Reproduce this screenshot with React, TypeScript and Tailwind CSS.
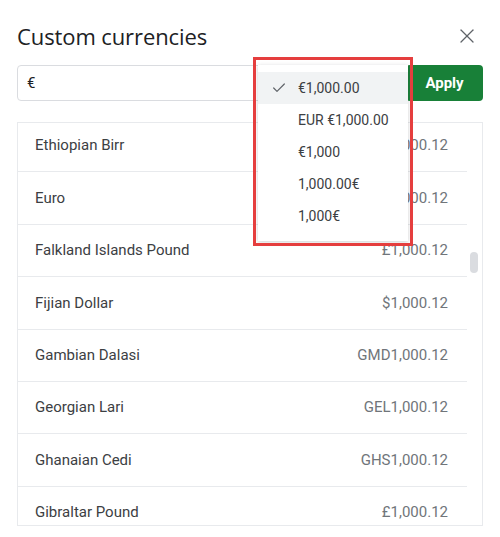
import { Check, X } from 'lucide-react';

const rows = [
    { name: 'Ethiopian Birr', value: 'ETB1,000.12' },
    { name: 'Euro', value: '€1,000.12' },
    { name: 'Falkland Islands Pound', value: '£1,000.12' },
    { name: 'Fijian Dollar', value: '$1,000.12' },
    { name: 'Gambian Dalasi', value: 'GMD1,000.12' },
    { name: 'Georgian Lari', value: 'GEL1,000.12' },
    { name: 'Ghanaian Cedi', value: 'GHS1,000.12' },
    { name: 'Gibraltar Pound', value: '£1,000.12' },
];

const formats = ['€1,000.00', 'EUR €1,000.00', '€1,000', '1,000.00€', '1,000€'];

export default function App() {
    return (
        <div className="relative w-[500px] h-[537px] bg-white overflow-hidden font-['Roboto',sans-serif]">
            {/* Header */}
            <div className="flex items-center justify-between pl-[17px] pr-[21px] pt-[21px] h-[51px]">
                <h1 className="font-['Open_Sans',sans-serif] text-[22px] leading-[28px] text-[#202124] tracking-[-0.1px]">
                    Custom currencies
                </h1>
                <X className="w-6 h-6 text-[#5f6368]" strokeWidth={1.3} />
            </div>

            {/* Search + apply */}
            <div className="flex gap-2 px-[17px] mt-[14px]">
                <div className="flex-1 h-9 border border-[#dadce0] rounded flex items-center px-[9px] text-[15px] text-[#202124]">
                    €
                </div>
                <button className="w-[77px] h-9 rounded bg-[#188038] text-white font-bold text-[15px]">
                    Apply
                </button>
            </div>

            {/* Currency list */}
            <div className="relative mx-[17px] mt-[21px] h-[404px] border border-[#e8eaed] overflow-hidden">
                <div className="-mt-[3px] mr-[15px]">
                    {rows.map((r) => (
                        <div
                            key={r.name}
                            className="h-[52.4px] flex items-center justify-between pl-[17px] pr-[19px] border-b border-[#e8eaed] text-[15px]"
                        >
                            <span className="text-[#3c4043]">{r.name}</span>
                            <span className="text-[#70757a]">{r.value}</span>
                        </div>
                    ))}
                </div>
                {/* Scrollbar */}
                <div className="absolute right-[4px] top-[129px] w-[8px] h-[21px] rounded-full bg-[#dadce0]" />
            </div>

            {/* Format dropdown */}
            <div className="absolute left-[258px] top-[65px] w-[150px] h-[176px] bg-white shadow-[0_1px_4px_rgba(60,64,67,0.25)] pt-[7px]">
                {formats.map((f, i) => (
                    <div
                        key={f}
                        className={`h-8 flex items-center text-[14px] text-[#3c4043] ${i === 0 ? 'bg-[#f1f3f4]' : ''}`}
                    >
                        <span className="w-[40px] flex justify-center pl-[1px]">
                            {i === 0 && <Check className="w-[16px] h-[16px] text-[#5f6368]" strokeWidth={1.8} />}
                        </span>
                        <span>{f}</span>
                    </div>
                ))}
            </div>

            {/* Highlight box */}
            <div className="absolute left-[253px] top-[57px] w-[160px] h-[189px] border-[3px] border-[#e53e3e]" />
        </div>
    );
}
